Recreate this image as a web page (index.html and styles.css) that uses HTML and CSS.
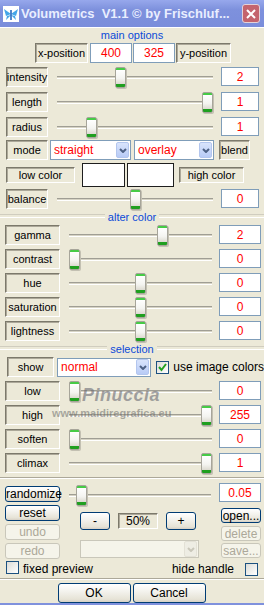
FILE: index.html
```html
<!DOCTYPE html>
<html lang="en">
<head>
<meta charset="UTF-8">
<meta name="viewport" content="width=device-width, initial-scale=1.0">
<title>Volumetrics</title>
<link rel="stylesheet" href="styles.css">
</head>
<body>
<div class="window">
  <div class="titlebar">
    <svg class="app-icon" viewBox="0 0 16 16"><rect width="16" height="16" fill="#fff"/><path d="M8 8L1 3l2 7zM8 8l7-5-2 7zM8 9l-5 5 1-4zM8 9l5 5-1-4z" fill="#45a6e8"/><path d="M8 4v10" stroke="#1d5fb8" stroke-width="1.5"/></svg>
    <span class="title">Volumetrics&nbsp; V1.1 © by Frischluf...</span>
    <button class="close"><svg width="10" height="10" viewBox="0 0 10 10"><path d="M1 1l8 8M9 1l-8 8" stroke="#fff" stroke-width="2"/></svg></button>
  </div>

  <div class="panel">
    <div class="section-head top">main options</div>
    <div class="pos-row">
      <span class="label">x-position</span>
      <input class="value" value="400">
      <input class="value" value="325">
      <span class="label">y-position</span>
    </div>

    <div class="row main first">
      <span class="label">intensity</span>
      <input class="slider" type="range" min="0" max="100" value="40">
      <input class="value" value="2">
    </div>
    <div class="row main loose">
      <span class="label">length</span>
      <input class="slider" type="range" min="0" max="100" value="100">
      <input class="value" value="1">
    </div>
    <div class="row main loose">
      <span class="label">radius</span>
      <input class="slider" type="range" min="0" max="100" value="20">
      <input class="value" value="1">
    </div>

    <div class="mode-row">
      <span class="label">mode</span>
      <div class="combo"><span>straight</span><span class="arrow"><svg width="8" height="5" viewBox="0 0 8 5"><path d="M1 1l3 3 3-3" stroke="#4d6185" stroke-width="2" fill="none"/></svg></span></div>
      <div class="combo"><span>overlay</span><span class="arrow"><svg width="8" height="5" viewBox="0 0 8 5"><path d="M1 1l3 3 3-3" stroke="#4d6185" stroke-width="2" fill="none"/></svg></span></div>
      <span class="label">blend</span>
    </div>

    <div class="color-row">
      <span class="label">low color</span>
      <span class="swatch"></span>
      <span class="swatch"></span>
      <span class="label">high color</span>
    </div>

    <div class="row main tight">
      <span class="label">balance</span>
      <input class="slider" type="range" min="0" max="100" value="50">
      <input class="value" value="0">
    </div>

    <div class="section-head">alter color</div>
    <div class="row wide first">
      <span class="label">gamma</span>
      <input class="slider" type="range" min="0" max="100" value="67">
      <input class="value" value="2">
    </div>
    <div class="row wide">
      <span class="label">contrast</span>
      <input class="slider" type="range" min="0" max="100" value="0">
      <input class="value" value="0">
    </div>
    <div class="row wide">
      <span class="label">hue</span>
      <input class="slider" type="range" min="0" max="100" value="50">
      <input class="value" value="0">
    </div>
    <div class="row wide">
      <span class="label">saturation</span>
      <input class="slider" type="range" min="0" max="100" value="50">
      <input class="value" value="0">
    </div>
    <div class="row wide">
      <span class="label">lightness</span>
      <input class="slider" type="range" min="0" max="100" value="50">
      <input class="value" value="0">
    </div>

    <div class="section-head">selection</div>
    <div class="show-row">
      <span class="label">show</span>
      <div class="combo"><span>normal</span><span class="arrow"><svg width="8" height="5" viewBox="0 0 8 5"><path d="M1 1l3 3 3-3" stroke="#4d6185" stroke-width="2" fill="none"/></svg></span></div>
      <span class="check checked"><svg width="11" height="11" viewBox="0 0 11 11"><path d="M2 5l2.5 3L9 2" stroke="#21a121" stroke-width="2" fill="none"/></svg></span>
      <span class="check-text">use image colors</span>
    </div>
    <div class="row wide">
      <span class="label">low</span>
      <input class="slider" type="range" min="0" max="100" value="0">
      <input class="value" value="0">
    </div>
    <div class="row wide">
      <span class="label">high</span>
      <input class="slider" type="range" min="0" max="100" value="100">
      <input class="value" value="255">
    </div>
    <div class="row wide">
      <span class="label">soften</span>
      <input class="slider" type="range" min="0" max="100" value="0">
      <input class="value" value="0">
    </div>
    <div class="row wide">
      <span class="label">climax</span>
      <input class="slider" type="range" min="0" max="100" value="100">
      <input class="value" value="1">
    </div>

    <div class="rule"></div>

    <div class="tools">
      <div class="col-left">
        <button class="btn">randomize</button>
        <button class="btn">reset</button>
        <button class="btn" disabled>undo</button>
        <button class="btn" disabled>redo</button>
      </div>
      <div class="col-mid">
        <input class="slider" type="range" min="0" max="100" value="5">
        <div class="zoom-row">
          <button class="btn zoom-btn">-</button>
          <span class="label zoom-val">50%</span>
          <button class="btn zoom-btn">+</button>
        </div>
        <div class="combo disabled"><span></span><span class="arrow"><svg width="8" height="5" viewBox="0 0 8 5"><path d="M1 1l3 3 3-3" stroke="#c9c7ba" stroke-width="2" fill="none"/></svg></span></div>
      </div>
      <div class="col-right">
        <input class="value" value="0.05">
        <button class="btn open">open...</button>
        <button class="btn delete" disabled>delete</button>
        <button class="btn save" disabled>save...</button>
      </div>
    </div>

    <div class="option-row">
      <span class="check"></span>
      <span class="check-text">fixed preview</span>
      <span class="check-text push">hide handle</span>
      <span class="check"></span>
    </div>

    <div class="rule low"></div>

    <div class="actions">
      <button class="btn action">OK</button>
      <button class="btn action">Cancel</button>
    </div>

    <div class="watermark">Pinuccia</div>
    <div class="watermark-url">www.maidiregrafica.eu</div>
  </div>
</div>
</body>
</html>
```

FILE: styles.css
```css
* {
  box-sizing: border-box;
}
body {
  margin: 0;
  width: 264px;
  height: 605px;
  overflow: hidden;
  background-color: #ece9d8;
  font-family: "Liberation Sans", Arial, sans-serif;
  font-size: 11px;
  color: #000;
}
input,
button {
  font-family: inherit;
}
.window {
  position: relative;
  border-bottom: 2px solid #7f91dd;
}
.titlebar {
  height: 27px;
  display: flex;
  align-items: center;
  padding: 0 4px 0 3px;
  background: linear-gradient(#97a8ec, #7e91dd 35%, #7a8ddb);
  color: #e9eeff;
}
.app-icon {
  width: 16px;
  height: 16px;
  flex: none;
}
.title {
  flex: 1;
  margin-left: 2px;
  font-size: 13px;
  font-weight: bold;
  white-space: nowrap;
  overflow: hidden;
}
.close {
  width: 18px;
  height: 19px;
  padding: 0;
  display: flex;
  align-items: center;
  justify-content: center;
  border: 1px solid #e3d2d8;
  border-radius: 3px;
  background: #c4646d;
}

.panel {
  display: flex;
  flex-direction: column;
  border-top: 1px solid #fff;
}

/* group titles */
.section-head {
  height: 12px;
  line-height: 12px;
  margin-top: 2px;
  display: flex;
  align-items: center;
  gap: 3px;
  color: #0b4ad8;
  font-size: 11px;
}
.section-head::before,
.section-head::after {
  content: "";
  flex: 1;
  height: 2px;
  margin-top: -3px;
  border-top: 1px solid #d0cdbf;
  border-bottom: 1px solid #fff;
}
.section-head.top {
  margin-top: 1px;
  justify-content: center;
}
.section-head.top::before,
.section-head.top::after {
  display: none;
}

/* sunken static labels */
.label {
  display: flex;
  align-items: center;
  justify-content: center;
  height: 20px;
  border: 1px solid;
  border-color: #7c796b #fff #fff #7c796b;
  box-shadow: inset 1px 1px 0 #aca899;
  background-color: #ece9d8;
  white-space: nowrap;
  font-size: 11px;
}
.value {
  width: 100%;
  height: 19px;
  margin: 0;
  padding: 0;
  border: 1px solid #7f9db9;
  background: #fff;
  color: #f00;
  font-size: 12px;
  text-align: center;
}

/* sliders */
.slider {
  -webkit-appearance: none;
  appearance: none;
  width: 100%;
  height: 21px;
  margin: 0;
  background: transparent;
}
.slider::-webkit-slider-runnable-track {
  height: 3px;
  background: linear-gradient(#a09e94 0 1px, #d6d3c4 1px 2px, #fff 2px);
}
.slider::-webkit-slider-thumb {
  -webkit-appearance: none;
  width: 11px;
  height: 21px;
  margin-top: -9px;
  border: 1px solid #a7a59a;
  border-radius: 2px;
  background: linear-gradient(#46cb46 0 2px, #fff 2px, #f4f4f0 55%, #dcdad0 calc(100% - 3px), #1f9f1f calc(100% - 3px));
  box-shadow: 1px 1px 0 #c3c0b2;
}

/* rows */
.pos-row {
  display: grid;
  grid-template-columns: 54px 42px 42px 55px;
  column-gap: 1px;
  height: 20px;
  margin-top: 2px;
  padding-left: 35px;
}
.pos-row .value {
  height: 20px;
}
.pos-row .label:first-child {
  margin-right: 1px;
}
.row {
  display: grid;
  height: 20px;
  margin-top: 4px;
  align-items: start;
}
.row.main {
  grid-template-columns: 42px 156px 38px;
  column-gap: 9px;
  padding-left: 6px;
}
.row.main .value {
  margin-left: -1px;
}
.row.wide {
  grid-template-columns: 55px 143px 42px;
  column-gap: 8px;
  padding-left: 5px;
}
.row.wide .slider {
  margin-left: 1px;
}
.row.first {
  margin-top: 2px;
}
.row.main.first {
  margin-top: 4px;
}
.row.loose {
  margin-top: 5px;
}
.row.tight {
  margin-top: 2px;
}

.mode-row {
  display: grid;
  grid-template-columns: 42px 83px 83px 36px;
  height: 20px;
  margin-top: 3px;
  padding-left: 6px;
}
.mode-row .combo:nth-child(2) {
  margin-left: 2px;
}
.mode-row .combo:nth-child(3) {
  margin-left: 3px;
}
.mode-row .label:last-child {
  margin-left: 5px;
}
.combo {
  display: flex;
  align-items: center;
  height: 20px;
  padding: 1px 1px 1px 3px;
  border: 1px solid #7f9db9;
  background: #fff;
  color: #f00;
  font-size: 12px;
}
.combo span:first-child {
  flex: 1;
}
.arrow {
  width: 13px;
  height: 16px;
  display: flex;
  align-items: center;
  justify-content: center;
  border: 1px solid #b3c6ee;
  border-radius: 2px;
  background: linear-gradient(#d9e4fc, #b8cbf6);
}
.combo.disabled {
  width: 119px;
  height: 18px;
  margin: 10px 0 0 11px;
  border-color: #c9c7ba;
  background: #f5f4ea;
}
.combo.disabled .arrow {
  border-color: #e3e1d6;
  background: #eeede4;
}

.color-row {
  display: grid;
  grid-template-columns: 69px 50px 49px 70px;
  align-items: center;
  height: 24px;
  margin-top: 3px;
  padding-left: 6px;
}
.color-row .label {
  height: 16px;
}
.swatch {
  height: 24px;
  margin-left: 7px;
  border: 1px solid #1e1e1e;
  background: #fff;
}
.swatch + .swatch {
  margin-left: 2px;
}
.color-row .label:last-child {
  margin-left: 5px;
}

.show-row {
  display: flex;
  align-items: center;
  height: 20px;
  margin-top: 2px;
  padding-left: 7px;
}
.show-row .label {
  width: 49px;
}
.show-row .combo {
  width: 98px;
  height: 19px;
  margin-left: 3px;
}
.show-row .check {
  margin-left: 5px;
}
.check {
  width: 13px;
  height: 13px;
  flex: none;
  display: flex;
  align-items: center;
  justify-content: center;
  border: 1px solid #1c5180;
  background: linear-gradient(135deg, #dcdcd7, #fff);
}
.check-text {
  margin-left: 4px;
  font-size: 12px;
  white-space: nowrap;
}

.rule {
  height: 2px;
  margin-top: 4px;
  border-top: 1px solid #aca899;
  border-bottom: 1px solid #fff;
}
.rule.low {
  margin-top: 2px;
}

/* bottom tools */
.tools {
  display: grid;
  grid-template-columns: 55px 143px 42px;
  column-gap: 8px;
  margin-top: 4px;
  padding-left: 5px;
}
.col-left {
  display: flex;
  flex-direction: column;
  gap: 3px;
  padding-top: 3px;
}
.col-mid {
  display: flex;
  flex-direction: column;
  padding-top: 2px;
  margin-left: 1px;
}
.col-right {
  display: flex;
  flex-direction: column;
}
.btn {
  height: 16px;
  padding: 0;
  border: 1px solid #003c74;
  border-radius: 3px;
  background: linear-gradient(#fff, #f4f3ee 40%, #e6e3d6 85%, #d6d0c5);
  color: #000;
  font-size: 12px;
  line-height: 14px;
}
.btn:disabled {
  border-color: #c9c7ba;
  background: #f5f4ea;
  color: #aca899;
}
.zoom-row {
  display: flex;
  gap: 8px;
  height: 18px;
  margin-top: 6px;
  padding-left: 11px;
}
.zoom-btn {
  width: 30px;
  height: 18px;
}
.zoom-val {
  width: 40px;
  height: 16px;
  margin-top: 1px;
  font-size: 12px;
}
.col-right .value {
  height: 19px;
}
.open {
  height: 15px;
  margin: 6px 0 0 2px;
}
.delete {
  height: 15px;
  margin: 3px 0 0 2px;
}
.save {
  height: 15px;
  margin: 2px 0 0 2px;
}

.option-row {
  display: flex;
  align-items: center;
  height: 15px;
  margin-top: 2px;
  padding: 0 6px 0 6px;
}
.option-row .check:first-child {
  margin-top: -2px;
}
.option-row .push {
  margin-left: auto;
  margin-right: 11px;
}
.option-row .check:last-child {
  margin-top: 2px;
}

.actions {
  display: flex;
  justify-content: center;
  gap: 2px;
  margin-top: 3px;
  padding-right: 1px;
}
.action {
  width: 73px;
  height: 20px;
  font-size: 12px;
}

/* watermark over the selection sliders */
.watermark {
  position: absolute;
  left: 82px;
  top: 385px;
  font-size: 18px;
  font-weight: bold;
  font-style: italic;
  color: rgba(105, 105, 115, 0.6);
  letter-spacing: 0.5px;
}
.watermark-url {
  position: absolute;
  left: 52px;
  top: 407px;
  font-size: 11px;
  font-weight: bold;
  color: rgba(105, 105, 105, 0.55);
}
```
